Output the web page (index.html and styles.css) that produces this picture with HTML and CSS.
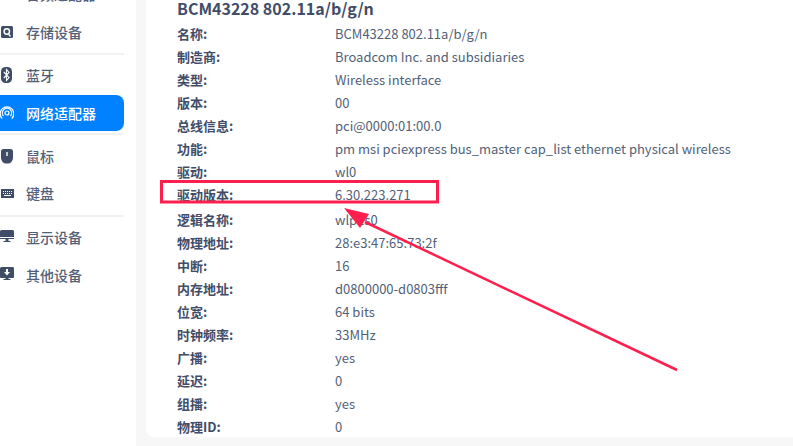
FILE: index.html
```html
<!DOCTYPE html>
<html>
<head>
	<title>设备管理器</title>
	<link rel="stylesheet" href="styles.css">
</head>
<body>
	<div class="page">
		<div class="sidebar">
			<div class="item"><span class="name">音频适配器</span></div>
			<div class="item">
				<svg class="icon" viewBox="0 0 14 16"><rect x="1" y="2" width="12" height="12" rx="1.500" fill="#3f4d66"/><circle cx="6.800" cy="7.500" r="2.700" fill="none" stroke="#fff" stroke-width="1.500"/><path d="M8.500 10 10.500 12.500" stroke="#fff" stroke-width="1.300"/></svg>
				<span class="name">存储设备</span>
			</div>
			<div class="line"></div>
			<div class="item">
				<svg class="icon" viewBox="0 0 14 16"><rect x="1" y="0" width="11" height="16" rx="4.500" fill="#3f4d66"/><path fill="none" stroke="#fff" stroke-width="1.100" d="M3.800 5 9 10.500 6.500 13.500V2.500L9 5.500 3.800 11"/></svg>
				<span class="name">蓝牙</span>
			</div>
			<div class="item active">
				<svg class="icon" viewBox="0 0 14 16"><g fill="none" stroke="#fff" stroke-width="1.200"><circle cx="7" cy="8" r="2"/><path d="M3.500 11A4.600 4.600 0 1 1 10.500 11M2.200 13.500A6.800 6.800 0 1 1 11.800 13.500"/></g></svg>
				<span class="name">网络适配器</span>
			</div>
			<div class="line after-active"></div>
			<div class="item">
				<svg class="icon" viewBox="0 0 14 16"><path fill="#3f4d66" fill-rule="evenodd" d="M3.500 1h7A2.500 2.500 0 0 1 13 3.500V10a5 5.500 0 0 1-6 5.400A5 5.500 0 0 1 1 10V3.500A2.500 2.500 0 0 1 3.500 1zM6.300 4v4h1.400V4z"/></svg>
				<span class="name">鼠标</span>
			</div>
			<div class="item keys">
				<svg class="icon" viewBox="0 -1 14 16"><path fill="#3f4d66" fill-rule="evenodd" d="M1 3h13v9H1zM3 5v1h1V5zm2 0v1h1V5zm2 0v1h1V5zm2 0v1h1V5zm2 0v1h1V5zM3 7v1h1V7zm2 0v1h1V7zm2 0v1h1V7zm2 0v1h1V7zm2 0v1h1V7zM4 9v1h7V9z"/></svg>
				<span class="name">键盘</span>
			</div>
			<div class="line"></div>
			<div class="item">
				<svg class="icon" viewBox="0 0 14 16"><path fill="#3f4d66" d="M1.500 1h11A1.500 1.500 0 0 1 14 2.500V8H0V2.500A1.500 1.500 0 0 1 1.500 1zM0 9h14v1H0zM5.500 10h3v2h2v1h-7v-1h2z"/></svg>
				<span class="name">显示设备</span>
			</div>
			<div class="item">
				<svg class="icon" viewBox="0 0 14 16"><path fill="#3f4d66" fill-rule="evenodd" d="M1.500 0h11A1.500 1.500 0 0 1 14 1.500V10a1 1 0 0 1-1 1H1a1 1 0 0 1-1-1V1.500A1.500 1.500 0 0 1 1.500 0zM6 2v3H4L7 8.500 10 5H8V2zM5.500 11h3v1h2v1h-7v-1h2z"/></svg>
				<span class="name">其他设备</span>
			</div>
		</div>
		<div class="content">
			<div class="card">
				<div class="title">BCM43228 802.11a/b/g/n</div>
				<div class="row"><div class="key">名称:</div><div class="val">BCM43228 802.11a/b/g/n</div></div>
				<div class="row"><div class="key">制造商:</div><div class="val">Broadcom Inc. and subsidiaries</div></div>
				<div class="row"><div class="key">类型:</div><div class="val">Wireless interface</div></div>
				<div class="row"><div class="key">版本:</div><div class="val">00</div></div>
				<div class="row"><div class="key">总线信息:</div><div class="val">pci@0000:01:00.0</div></div>
				<div class="row"><div class="key">功能:</div><div class="val">pm msi pciexpress bus_master cap_list ethernet physical wireless</div></div>
				<div class="row"><div class="key">驱动:</div><div class="val">wl0</div></div>
				<div class="row marked"><div class="key">驱动版本:</div><div class="val">6.30.223.271</div></div>
				<div class="row"><div class="key">逻辑名称:</div><div class="val">wlp1s0</div></div>
				<div class="row"><div class="key">物理地址:</div><div class="val">28:e3:47:65:73:2f</div></div>
				<div class="row"><div class="key">中断:</div><div class="val">16</div></div>
				<div class="row"><div class="key">内存地址:</div><div class="val">d0800000-d0803fff</div></div>
				<div class="row"><div class="key">位宽:</div><div class="val">64 bits</div></div>
				<div class="row"><div class="key">时钟频率:</div><div class="val">33MHz</div></div>
				<div class="row"><div class="key">广播:</div><div class="val">yes</div></div>
				<div class="row"><div class="key">延迟:</div><div class="val">0</div></div>
				<div class="row"><div class="key">组播:</div><div class="val">yes</div></div>
				<div class="row"><div class="key">物理ID:</div><div class="val">0</div></div>
			</div>
		</div>
		<!-- red marks drawn over the screenshot -->
		<svg class="marks" viewBox="0 0 793 446">
			<rect x="161.500" y="181.500" width="276" height="20.500" fill="none" stroke="#ff1f4f" stroke-width="3"/>
			<path d="M677 370 365 222" fill="none" stroke="#ff1f4f" stroke-width="2.500"/>
			<path d="M344 208 369 214 360 228z" fill="#ff1f4f"/>
		</svg>
	</div>
</body>
</html>
```

FILE: styles.css
```css
html, body {
	margin: 0;
	padding: 0;
}

body {
	background-color: white;
	color: #414d68;
	font-family: "Noto Sans CJK SC", "Noto Sans", sans-serif;
}

.page {
	position: relative;
	display: flex;
	width: 793px;
	height: 446px;
	overflow: hidden;
}

.sidebar {
	width: 124px;
	flex: none;
	margin-top: -25px;
	margin-right: 12px;
}

.item {
	display: flex;
	align-items: center;
	height: 38px;
	font-size: 14px;
	font-weight: 500;
	color: #525f78;
}

.icon {
	width: 14px;
	height: 16px;
	margin-right: 12px;
	flex: none;
}

.item .name:first-child {
	margin-left: 26px;
}

.item.active {
	height: 36px;
	margin: 1px 0;
	background-color: #0081ff;
	border-radius: 0 8px 8px 0;
	color: white;
}

.item.keys {
	height: 36px;
	margin-bottom: 4px;
}

.line {
	height: 2px;
	margin: 2px 0 1px;
	background-color: #f2f2f2;
}

.line.after-active {
	margin: 2px 0;
}

.content {
	flex: 1;
	background-color: #f7f7f7;
	padding: 0 0 9px 10px;
}

.card {
	height: 100%;
	background-color: white;
	border-radius: 0 0 0 8px;
	padding-left: 31px;
	box-sizing: border-box;
}

.title {
	height: 22px;
	line-height: 16px;
	font-size: 16px;
	font-weight: 700;
}

.row {
	display: flex;
	height: 23px;
	line-height: 23px;
	font-size: 13px;
}

.row.marked {
	margin-bottom: 2px;
}

.key {
	width: 158px;
	flex: none;
	font-weight: 700;
}

.val {
	color: #525f78;
	white-space: nowrap;
}

.marks {
	position: absolute;
	top: 0;
	left: 0;
	width: 793px;
	height: 446px;
}
```
